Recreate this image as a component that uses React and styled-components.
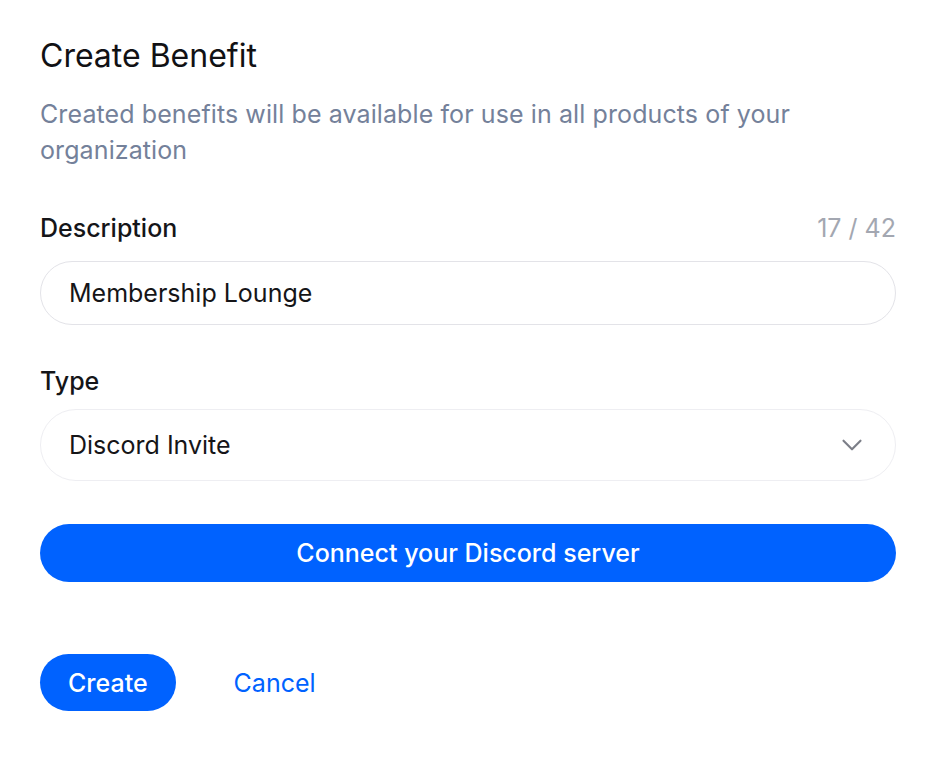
import React, { useState } from 'react';
import styled, { createGlobalStyle } from 'styled-components';

const GlobalStyle = createGlobalStyle`
  body {
    margin: 0;
    background: #ffffff;
    font-family: Inter, 'Noto Sans', sans-serif;
    -webkit-font-smoothing: antialiased;
  }
`;

const App = () => {
  const [description, setDescription] = useState('Membership Lounge');

  return (
    <>
      <GlobalStyle />
      <Page>
        <Header>
          <Title>Create Benefit</Title>
          <Subtitle>Created benefits will be available for use in all products of your organization</Subtitle>
        </Header>

        <Field>
          <LabelRow>
            <Label>Description</Label>
            <Counter>
              {description.length} / 42
            </Counter>
          </LabelRow>
          <TextInput value={description} maxLength={42} onChange={(e) => setDescription(e.target.value)} />
        </Field>

        <Field $gap={10} $top={38}>
          <LabelRow>
            <Label>Type</Label>
          </LabelRow>
          <SelectBox type="button">
            <span>Discord Invite</span>
            <svg width="34" height="34" viewBox="0 0 24 24" fill="none" stroke="#7c7f88" strokeWidth="1.5" strokeLinecap="round" strokeLinejoin="round">
              <path d="m6 9 6 6 6-6" />
            </svg>
          </SelectBox>
        </Field>

        <ConnectButton type="button">Connect your Discord server</ConnectButton>

        <Actions>
          <PrimaryButton type="button">Create</PrimaryButton>
          <LinkButton type="button">Cancel</LinkButton>
        </Actions>
      </Page>
    </>
  );
};
export default App;

const Page = styled.div`
  display: flex;
  flex-direction: column;
  padding: 36px 44px 40px 40px;
`;

const Header = styled.div`
  display: flex;
  flex-direction: column;
  gap: 20px;
`;

const Title = styled.h1`
  margin: 0;
  font-size: 32px;
  line-height: 40px;
  font-weight: 400;
  color: #111114;
`;

const Subtitle = styled.p`
  margin: 0;
  font-size: 25px;
  line-height: 36px;
  letter-spacing: 0.1px;
  color: #74819a;
  max-width: 800px;
`;

const Field = styled.div`
  display: flex;
  flex-direction: column;
  gap: ${({ $gap }) => $gap ?? 15}px;
  margin-top: ${({ $top }) => $top ?? 42}px;
`;

const LabelRow = styled.div`
  display: flex;
  justify-content: space-between;
  align-items: center;
`;

const Label = styled.label`
  font-size: 25px;
  line-height: 36px;
  font-weight: 500;
  color: #151518;
`;

const Counter = styled.span`
  font-size: 25px;
  line-height: 36px;
  color: #a3a7b1;
`;

const TextInput = styled.input`
  box-sizing: border-box;
  height: 64px;
  width: 100%;
  padding: 0 28px;
  border: 1.5px solid #e3e3e8;
  border-radius: 999px;
  font-family: inherit;
  font-size: 25px;
  color: #151518;
  background: #ffffff;
  outline: none;
`;

const SelectBox = styled.button`
  box-sizing: border-box;
  height: 72px;
  width: 100%;
  display: flex;
  align-items: center;
  justify-content: space-between;
  padding: 0 26px 0 28px;
  border: 1.5px solid #eeeef2;
  border-radius: 999px;
  background: #ffffff;
  font-family: inherit;
  font-size: 25px;
  color: #151518;
  cursor: pointer;
`;

const ConnectButton = styled.button`
  margin-top: 43px;
  height: 58px;
  width: 100%;
  border: none;
  border-radius: 999px;
  background: #0062ff;
  color: #ffffff;
  font-family: inherit;
  font-size: 25px;
  font-weight: 500;
  cursor: pointer;
`;

const Actions = styled.div`
  display: flex;
  align-items: center;
  gap: 30px;
  margin-top: 72px;
`;

const PrimaryButton = styled.button`
  height: 57px;
  padding: 0 28px;
  border: none;
  border-radius: 999px;
  background: #0062ff;
  color: #ffffff;
  font-family: inherit;
  font-size: 25px;
  font-weight: 500;
  cursor: pointer;
`;

const LinkButton = styled.button`
  padding: 0 28px;
  border: none;
  background: none;
  color: #0062ff;
  font-family: inherit;
  font-size: 25px;
  cursor: pointer;
`;
